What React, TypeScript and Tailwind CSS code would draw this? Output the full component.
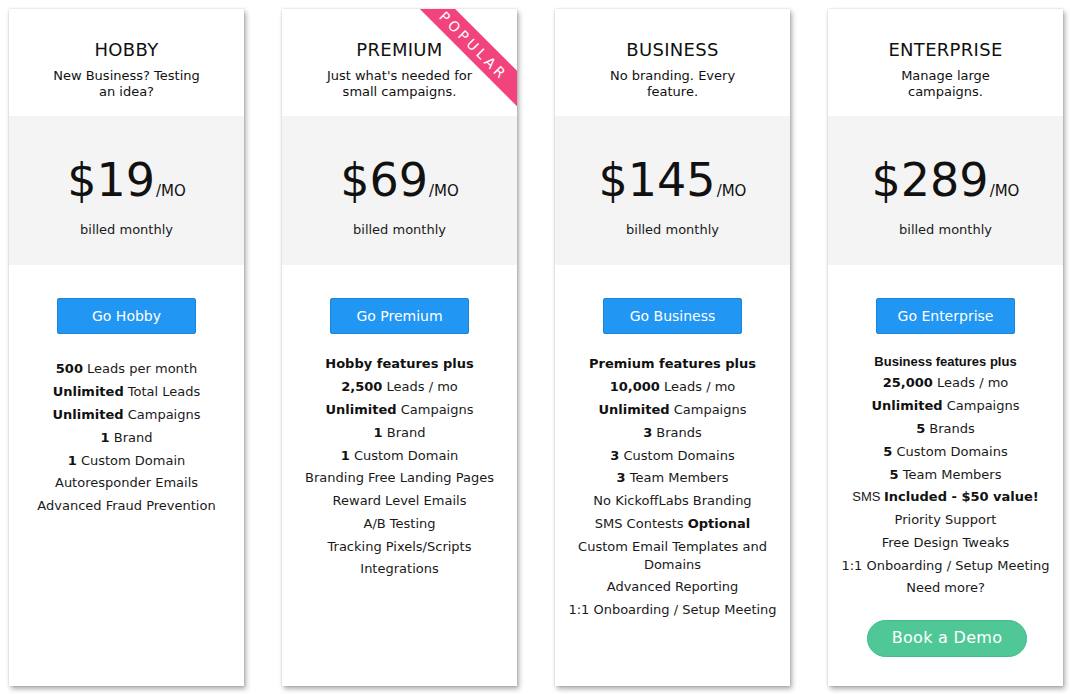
import React from "react";

type Feat = { parts: { t: string; b?: boolean; arial?: boolean }[]; head?: boolean; arialHead?: boolean };

const B = (t: string) => ({ t, b: true });
const N = (t: string) => ({ t });

const plans: {
  name: string;
  sub: string;
  price: string;
  btn: string;
  listMt: string;
  features: Feat[];
  popular?: boolean;
  demo?: boolean;
}[] = [
  {
    name: "HOBBY",
    sub: "New Business? Testing an idea?",
    price: "$19",
    btn: "Go Hobby",
    listMt: "mt-[24px]",
    features: [
      { parts: [B("500"), N(" Leads per month")] },
      { parts: [B("Unlimited"), N(" Total Leads")] },
      { parts: [B("Unlimited"), N(" Campaigns")] },
      { parts: [B("1"), N(" Brand")] },
      { parts: [B("1"), N(" Custom Domain")] },
      { parts: [N("Autoresponder Emails")] },
      { parts: [N("Advanced Fraud Prevention")] },
    ],
  },
  {
    name: "PREMIUM",
    sub: "Just what's needed for small campaigns.",
    price: "$69",
    btn: "Go Premium",
    listMt: "mt-[19px]",
    popular: true,
    features: [
      { parts: [B("Hobby features plus")] },
      { parts: [B("2,500"), N(" Leads / mo")] },
      { parts: [B("Unlimited"), N(" Campaigns")] },
      { parts: [B("1"), N(" Brand")] },
      { parts: [B("1"), N(" Custom Domain")] },
      { parts: [N("Branding Free Landing Pages")] },
      { parts: [N("Reward Level Emails")] },
      { parts: [N("A/B Testing")] },
      { parts: [N("Tracking Pixels/Scripts")] },
      { parts: [N("Integrations")] },
    ],
  },
  {
    name: "BUSINESS",
    sub: "No branding. Every feature.",
    price: "$145",
    btn: "Go Business",
    listMt: "mt-[19px]",
    features: [
      { parts: [B("Premium features plus")] },
      { parts: [B("10,000"), N(" Leads / mo")] },
      { parts: [B("Unlimited"), N(" Campaigns")] },
      { parts: [B("3"), N(" Brands")] },
      { parts: [B("3"), N(" Custom Domains")] },
      { parts: [B("3"), N(" Team Members")] },
      { parts: [N("No KickoffLabs Branding")] },
      { parts: [N("SMS Contests "), B("Optional")] },
      { parts: [N("Custom Email Templates and Domains")] },
      { parts: [N("Advanced Reporting")] },
      { parts: [N("1:1 Onboarding / Setup Meeting")] },
    ],
  },
  {
    name: "ENTERPRISE",
    sub: "Manage large campaigns.",
    price: "$289",
    btn: "Go Enterprise",
    listMt: "mt-[18px]",
    demo: true,
    features: [
      { parts: [{ t: "Business features plus", b: true, arial: true }], arialHead: true },
      { parts: [B("25,000"), N(" Leads / mo")] },
      { parts: [B("Unlimited"), N(" Campaigns")] },
      { parts: [B("5"), N(" Brands")] },
      { parts: [B("5"), N(" Custom Domains")] },
      { parts: [B("5"), N(" Team Members")] },
      { parts: [{ t: "SMS ", arial: true }, B("Included - $50 value!")] },
      { parts: [N("Priority Support")] },
      { parts: [N("Free Design Tweaks")] },
      { parts: [N("1:1 Onboarding / Setup Meeting")] },
      { parts: [N("Need more?")] },
    ],
  },
];

function Card({ p }: { p: (typeof plans)[number] }) {
  return (
    <div className="relative w-[235px] h-[677px] shrink-0 bg-white overflow-hidden shadow-[0_0_2px_rgba(0,0,0,0.18),2px_3px_5px_rgba(0,0,0,0.32)]">
      {p.popular && (
        <div className="absolute left-[107px] top-[24px] w-[170px] h-[25px] rotate-45 bg-[#f2437c] flex items-center justify-center text-white text-[14px] tracking-[3.5px] leading-none">
          POPULAR
        </div>
      )}
      <div className="pt-[30px] pb-[16px] text-center">
        <div className="text-[18px] leading-[22px] text-[#111] tracking-[0.3px]">{p.name}</div>
        <div className="mt-[7px] w-[160px] mx-auto text-[13px] leading-[16px] text-[#111]">{p.sub}</div>
      </div>
      <div className="h-[149px] bg-[#f4f4f4] pt-[41px] flex flex-col items-center">
        <div className="flex items-baseline text-[#111]">
          <span className="text-[46px] leading-[46px]">{p.price}</span>
          <span className="text-[15px] ml-[1px]">/MO</span>
        </div>
        <div className="mt-[18px] text-[13px] leading-[18px] text-[#1a1a1a]">billed monthly</div>
      </div>
      <div className="flex justify-center mt-[33px]">
        <div className="w-[139px] h-[36px] bg-[#2196f3] border border-[#1b86d9] rounded-[2px] flex items-center justify-center text-white text-[14px] pt-[1px]">
          {p.btn}
        </div>
      </div>
      <ul className={`${p.listMt} px-[2px] text-center text-[13px] text-[#1a1a1a]`}>
        {p.features.map((f, i) => (
          <li
            key={i}
            className={f.arialHead ? "leading-[16px] py-[2px]" : "leading-[18px] py-[2.4px]"}
          >
            {f.parts.map((x, j) => (
              <span
                key={j}
                className={`${x.b ? "font-bold text-[#111]" : ""} ${x.arial ? "font-['Liberation_Sans',Arial,sans-serif]" : ""}`}
              >
                {x.t}
              </span>
            ))}
          </li>
        ))}
      </ul>
      {p.demo && (
        <div className="flex justify-center mt-[20px] pl-[3px]">
          <div className="w-[160px] h-[37px] rounded-full bg-[#50c797] border border-[#44bb8b] flex items-center justify-center text-white text-[16px] tracking-[0.3px]">
            Book a Demo
          </div>
        </div>
      )}
    </div>
  );
}

export default function App() {
  return (
    <div className="w-[1070px] h-[694px] bg-white font-['DejaVu_Sans',Verdana,sans-serif] pl-[9px] pt-[9px] flex gap-[38px]">
      {plans.map((p) => (
        <Card key={p.name} p={p} />
      ))}
    </div>
  );
}
